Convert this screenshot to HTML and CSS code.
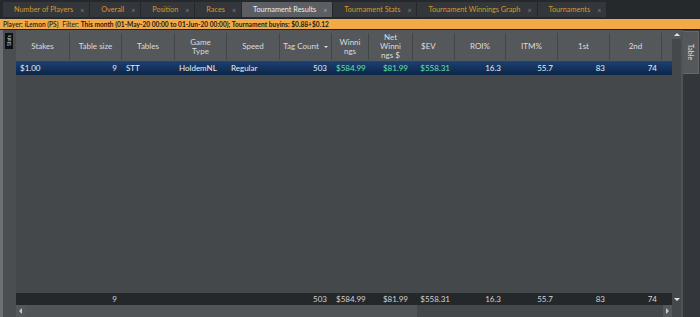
FILE: index.html
```html
<!DOCTYPE html>
<html lang="en">
<head>
    <meta charset="UTF-8">
    <title>Tournament Results</title>
    <link rel="stylesheet" href="styles.css">
</head>
<body>
    <div class="app">
        <div class="tabs">
            <div class="tab">Number of Players<span class="x">×</span></div>
            <div class="tab">Overall<span class="x">×</span></div>
            <div class="tab">Position<span class="x">×</span></div>
            <div class="tab">Races<span class="x">×</span></div>
            <div class="tab active">Tournament Results<span class="x">×</span></div>
            <div class="tab">Tournament Stats<span class="x">×</span></div>
            <div class="tab">Tournament Winnings Graph<span class="x">×</span></div>
            <div class="tab">Tournaments<span class="x">×</span></div>
        </div>

        <div class="filter">
            <span>Player: iLemon (PS)</span>
            <span class="lbl">Filter:</span>
            <b>This month (01-May-20 00:00 to 01-Jun-20 00:00); Tournament buyins: $0.88+$0.12</b>
        </div>

        <div class="main">
            <div class="side-left">
                <div class="stats-tab">Stats</div>
            </div>

            <div class="grid">
                <div class="view">
                    <div class="row head">
                        <div>Stakes</div>
                        <div>Table size</div>
                        <div>Tables</div>
                        <div>Game<br>Type</div>
                        <div>Speed</div>
                        <div class="sorted">Tag Count<span class="caret"></span></div>
                        <div>Winni<br>ngs</div>
                        <div>Net<br>Winni<br>ngs $</div>
                        <div class="left">$EV</div>
                        <div>ROI%</div>
                        <div>ITM%</div>
                        <div>1st</div>
                        <div>2nd</div>
                        <div></div>
                    </div>

                    <div class="row data">
                        <div>$1.00</div>
                        <div class="num">9</div>
                        <div>STT</div>
                        <div>HoldemNL</div>
                        <div>Regular</div>
                        <div class="num">503</div>
                        <div class="num green">$584.99</div>
                        <div class="num green">$81.99</div>
                        <div class="num green">$558.31</div>
                        <div class="num">16.3</div>
                        <div class="num">55.7</div>
                        <div class="num">83</div>
                        <div class="num">74</div>
                        <div></div>
                    </div>

                    <div class="filler"></div>

                    <div class="row total">
                        <div></div>
                        <div class="num">9</div>
                        <div></div>
                        <div></div>
                        <div></div>
                        <div class="num">503</div>
                        <div class="num">$584.99</div>
                        <div class="num">$81.99</div>
                        <div class="num">$558.31</div>
                        <div class="num">16.3</div>
                        <div class="num">55.7</div>
                        <div class="num">83</div>
                        <div class="num">74</div>
                        <div></div>
                    </div>
                </div>

                <div class="vscroll">
                    <div class="btn"><span class="tri up"></span></div>
                    <div class="track"></div>
                    <div class="btn plain"><span class="tri down"></span></div>
                </div>

                <div class="hscroll">
                    <div class="btn"><span class="tri left"></span></div>
                    <div class="thumb"></div>
                    <div class="track"></div>
                    <div class="btn"><span class="tri right"></span></div>
                </div>

                <div class="corner"></div>
            </div>

            <div class="side-right">
                <div class="table-tab">Table</div>
            </div>
        </div>
    </div>
</body>
</html>
```

FILE: styles.css
```css
* {
    padding: 0;
    margin: 0;
    box-sizing: border-box;
}

body {
    background: #26292b;
    font-family: Lato, "Noto Sans", sans-serif;
    overflow: hidden;
}

.app {
    width: 700px;
    height: 317px;
    display: flex;
    flex-direction: column;
}

/* tab bar */
.tabs {
    height: 19px;
    display: flex;
    gap: 1px;
    padding: 2px 0 2px 3px;
    background: #26292b;
}

.tab {
    height: 15px;
    display: flex;
    align-items: center;
    padding: 0 5px 0 11px;
    background: #33363a;
    color: #d9962c;
    font-size: 7.3px;
    white-space: nowrap;
}

.tab .x {
    margin-left: 7px;
    color: #7f8286;
    font-size: 7px;
}

.tab.active {
    background: #5b5f63;
    color: #ececec;
}

.tab.active .x {
    color: #a7aaad;
}

/* filter line */
.filter {
    height: 10px;
    line-height: 10px;
    padding-left: 3px;
    background: #f2aa48;
    color: #1d1a14;
    font-size: 6.6px;
    white-space: nowrap;
}

.filter span {
    font-weight: 600;
}

.filter .lbl {
    font-weight: 400;
    margin-left: 2px;
}

/* main area */
.main {
    flex: 1;
    display: flex;
    border-top: 1px solid #1f2224;
}

.side-left {
    width: 16px;
    border-left: 3px solid #6d7073;
    background: #4b4e51;
    padding: 3px 0 0 2px;
}

.stats-tab {
    width: 8px;
    height: 16px;
    background: #0e0f10;
    color: #d8d8d8;
    font-size: 5px;
    writing-mode: vertical-rl;
    transform: rotate(180deg);
    display: flex;
    align-items: center;
    justify-content: center;
}

.grid {
    width: 667px;
    display: grid;
    grid-template-columns: 656px 9px;
    grid-template-rows: 275px 12px;
    background: #45484b;
    border-right: 2px solid #505356;
}

.view {
    display: flex;
    flex-direction: column;
    overflow: hidden;
}

.row {
    display: grid;
    grid-template-columns: 54px 52px 53px 52px 53px 52px 37px 44px 42px 51px 52px 52px 52px 10px;
    font-size: 8px;
    white-space: nowrap;
}

.row > div {
    overflow: hidden;
}

.head {
    height: 32px;
    padding: 3px 0 1px;
    background: #55585b;
    border-bottom: 1px solid #3c3f42;
    color: #dcdcdc;
    line-height: 9px;
}

.head > div {
    display: flex;
    align-items: center;
    justify-content: center;
    text-align: center;
    padding-right: 10px;
    border-right: 1px solid #424548;
}

.head > div:last-child {
    border-right: 0;
}

.head .sorted {
    padding-right: 4px;
}

.head .left {
    justify-content: flex-start;
    padding-left: 8px;
}

.caret {
    margin-left: 5px;
    border-left: 2px solid transparent;
    border-right: 2px solid transparent;
    border-top: 2px solid #dcdcdc;
}

.data {
    height: 13px;
    line-height: 13px;
    background: linear-gradient(#1b3f70, #0b2649);
    color: #ececec;
}

.row > div {
    padding: 0 4px;
}

.row > .num {
    text-align: right;
    padding-right: 5px;
}

.green {
    color: #63e39a;
}

.filler {
    flex: 1;
}

.total {
    height: 12px;
    line-height: 12px;
    background: #25282b;
    color: #d2d2d2;
}

/* scrollbars */
.vscroll {
    display: flex;
    flex-direction: column;
}

.vscroll .track,
.hscroll .track {
    flex: 1;
}

.btn {
    width: 9px;
    height: 9px;
    display: flex;
    align-items: center;
    justify-content: center;
    background: #55585b;
}

.vscroll .btn.plain {
    height: 11px;
    background: #45484b;
}

.hscroll {
    display: flex;
    align-items: stretch;
}

.hscroll .btn {
    height: 12px;
}

.thumb {
    width: 392px;
    background: #525558;
}

.corner {
    background: #45484b;
}

.tri {
    width: 0;
    height: 0;
}

.tri.up {
    border-left: 3px solid transparent;
    border-right: 3px solid transparent;
    border-bottom: 3px solid #e0e0e0;
}

.tri.down {
    border-left: 3px solid transparent;
    border-right: 3px solid transparent;
    border-top: 3px solid #e0e0e0;
}

.tri.left {
    border-top: 3px solid transparent;
    border-bottom: 3px solid transparent;
    border-right: 3px solid #c8c8c8;
}

.tri.right {
    border-top: 3px solid transparent;
    border-bottom: 3px solid transparent;
    border-left: 3px solid #c8c8c8;
}

/* right dock */
.side-right {
    flex: 1;
    background: #33363a;
    padding-top: 1px;
}

.table-tab {
    width: 16px;
    height: 43px;
    background: #55585b;
    border: 1px solid #65686b;
    border-left: 0;
    color: #dedede;
    font-size: 7px;
    writing-mode: vertical-rl;
    display: flex;
    align-items: center;
    justify-content: center;
}
```
